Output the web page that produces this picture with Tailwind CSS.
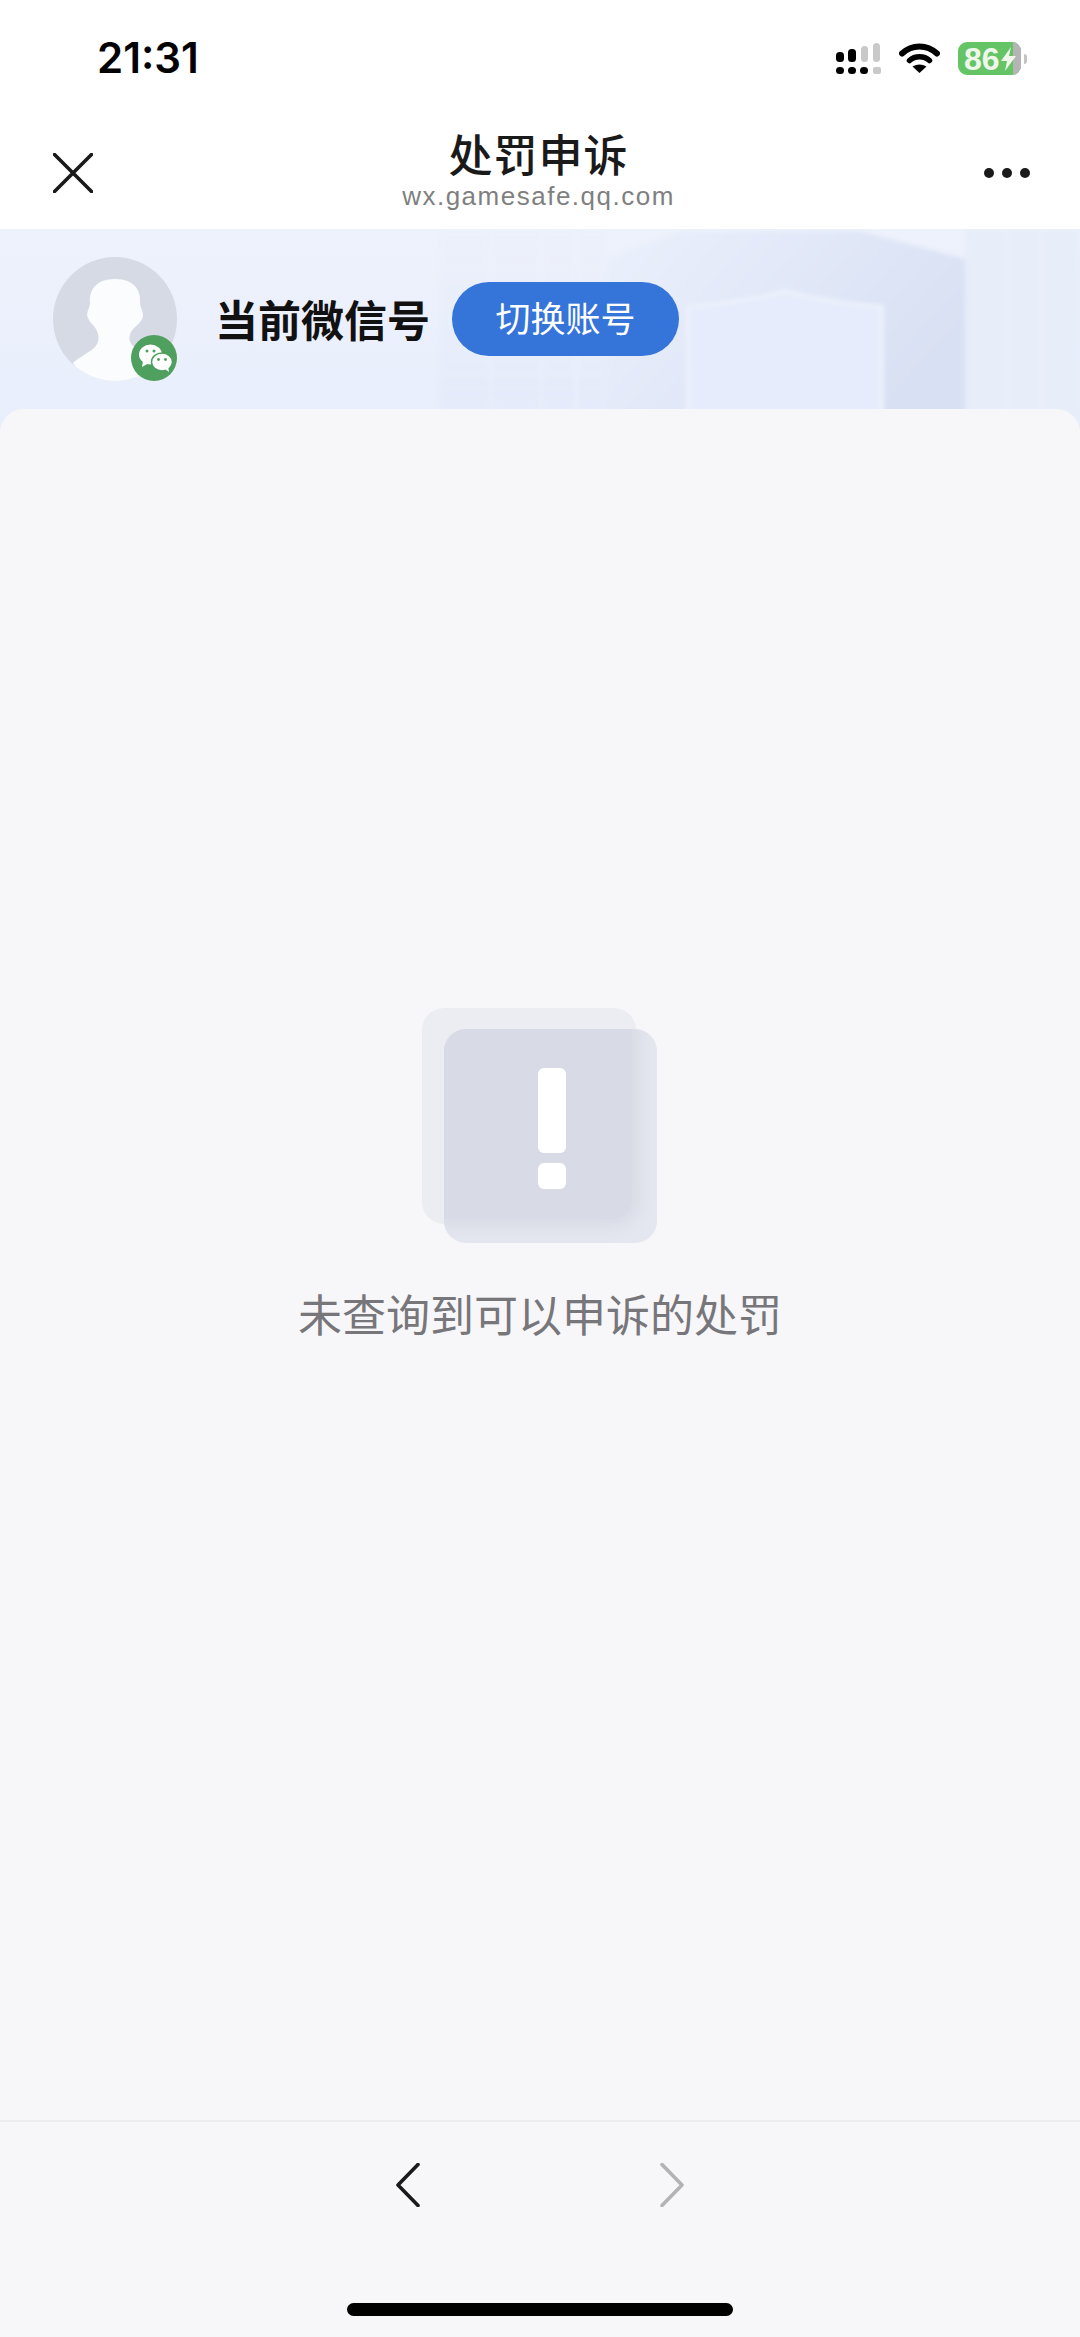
<!DOCTYPE html>
<html lang="zh-CN">
<head>
	<meta charset="UTF-8">
	<meta name="viewport" content="width=device-width, initial-scale=1.0">
	<title>处罚申诉</title>
	<script src="https://cdn.jsdelivr.net/npm/@tailwindcss/browser@4"></script>
</head>
<body class="bg-white font-['Inter','Noto_Sans_CJK_SC',sans-serif]">
<div class="w-[1080px] h-[2337px] flex flex-col overflow-hidden bg-[#f7f7f9]">

	<!-- status bar -->
	<div class="h-[120px] bg-white flex items-start justify-between pl-[97px] pr-[53px] pt-[33px] shrink-0">
		<div class="text-[42px] leading-[50px] font-semibold text-black">21:31</div>
		<div class="flex items-start gap-[18px] mt-[9px]">
			<svg class="mt-[1px]" width="45" height="31" viewBox="0 0 45 31">
				<g fill="#000">
					<rect x="0" y="9" width="8" height="10" rx="3.5"/><rect x="12" y="6" width="8" height="13" rx="3.5"/>
					<rect x="0" y="24" width="8" height="7" rx="3.5"/><rect x="12" y="24" width="8" height="7" rx="3.5"/><rect x="24" y="24" width="8" height="7" rx="3.5"/>
				</g>
				<g fill="#c9c9c9">
					<rect x="25" y="3" width="7" height="16" rx="3.5"/><rect x="37" y="0" width="7" height="19" rx="3.5"/><rect x="37" y="24" width="8" height="7" rx="2"/>
				</g>
			</svg>
			<svg class="mt-[1px]" width="41" height="30" viewBox="0 0 41 30">
				<path d="M3 10.5 C13 1 28 1 38 10.5" fill="none" stroke="#000" stroke-width="6" stroke-linecap="round"/>
				<path d="M10.5 17.5 C16 12.5 25 12.5 30.5 17.5" fill="none" stroke="#000" stroke-width="5.5" stroke-linecap="round"/>
				<path d="M13.5 23.5 Q20.5 19.5 27.5 23.5 L20.5 30 Z" fill="#000"/>
			</svg>
			<div class="flex items-center">
				<div class="relative w-[63px] h-[33px] rounded-[9px] bg-[#65c466] overflow-hidden flex items-center pl-[6px] text-[#eef7ea] text-[32px] leading-none font-bold font-['Liberation_Sans',sans-serif]">
					<div class="absolute right-0 top-0 bottom-0 w-[8px] bg-[#b5b5b5]"></div>
					<span class="relative">86</span>
					<svg class="relative" width="17" height="24" viewBox="0 0 17 24"><path d="M11 0 L1 14 H7 L5 24 L16 9 H9 Z" fill="#eef7ea"/></svg>
				</div>
				<div class="ml-[3px] w-[3px] h-[10px] rounded-r-[3px] bg-[#c4c4c4]"></div>
			</div>
		</div>
	</div>

	<!-- title bar -->
	<div class="h-[109px] bg-white flex items-start justify-between pl-[53px] pr-[50px] shrink-0">
		<svg class="mt-[33px]" width="40" height="40" viewBox="0 0 40 40"><path d="M1.5 1.5 L38.5 38.5 M38.5 1.5 L1.5 38.5" stroke="#1a1a1a" stroke-width="3.6" stroke-linecap="round"/></svg>
		<div class="flex flex-col items-center mt-[7px]">
			<div class="text-[44px] leading-[58px] font-medium text-[#1a1a1a] tracking-[1px]">处罚申诉</div>
			<div class="-mt-[4px] text-[26px] leading-[30px] text-[#7f7f7f] tracking-[1.5px] font-['Liberation_Sans',sans-serif]">wx.gamesafe.qq.com</div>
		</div>
		<div class="flex gap-[8px] mt-[48px]">
			<div class="w-[10px] h-[10px] rounded-full bg-[#1a1a1a]"></div>
			<div class="w-[10px] h-[10px] rounded-full bg-[#1a1a1a]"></div>
			<div class="w-[10px] h-[10px] rounded-full bg-[#1a1a1a]"></div>
		</div>
	</div>

	<!-- account banner -->
	<div class="relative h-[200px] shrink-0 overflow-hidden bg-gradient-to-b from-[#eef2fc] to-[#e8eefc] flex items-start pl-[53px] pt-[28px]">
		<!-- shield backdrop -->
		<svg class="absolute left-0 top-0 blur-[2px]" width="1080" height="200" viewBox="0 0 1080 200">
			<defs>
				<linearGradient id="big" x1="0" y1="0" x2="1" y2="0.5">
					<stop offset="0" stop-color="#ebf0fc"/>
					<stop offset="1" stop-color="#d8e0f3"/>
				</linearGradient>
				<linearGradient id="stripes" x1="0" y1="0" x2="0" y2="1">
					<stop offset="0" stop-color="#e9eefb" stop-opacity="0.2"/>
					<stop offset="1" stop-color="#e4eaf9"/>
				</linearGradient>
			</defs>
			<rect x="440" y="0" width="165" height="200" fill="url(#stripes)"/>
			<rect x="490" y="0" width="2" height="200" fill="#f0f4fd" opacity="0.4"/>
			<rect x="540" y="0" width="2" height="200" fill="#f0f4fd" opacity="0.4"/>
			<rect x="575" y="0" width="3" height="200" fill="#f0f4fd" opacity="0.4"/>
			<rect x="965" y="0" width="115" height="200" fill="#e8edfa"/>
			<rect x="1005" y="0" width="2" height="200" fill="#f0f4fd" opacity="0.6"/>
			<rect x="1040" y="0" width="2" height="200" fill="#f0f4fd" opacity="0.6"/>
			<path d="M605 30 L680 2 H860 L965 30 V200 H605 Z" fill="url(#big)"/>
			<path d="M688 78 L785 64 L882 78 V200 H688 Z" fill="#e6ecfb"/>
			<path d="M688 200 V78 Q750 72 785 62 Q820 72 882 78 V200" fill="none" stroke="#edf1fc" stroke-width="4"/>
		</svg>
		<div class="relative w-[124px] h-[124px] shrink-0">
			<div class="w-full h-full rounded-full overflow-hidden bg-[#d5dae4]">
				<svg width="124" height="124" viewBox="0 0 124 124">
					<path d="M62 22 C42 22 36 34 37 46 C37 50 34 54 34 58 C35 64 40 67 43 72 C46 78 47 84 42 90 C36 96 26 100 20 106 L30 124 H98 L108 100 C96 96 84 94 79 88 C75 83 76 77 80 72 C84 68 90 64 90 58 C90 54 87 50 87 46 C88 34 82 22 62 22 Z" fill="#fbfcfe"/>
				</svg>
			</div>
			<div class="absolute right-0 bottom-0 w-[46px] h-[46px] rounded-full bg-[#4f9f5f]">
				<svg width="46" height="46" viewBox="0 0 46 46">
					<ellipse cx="19.5" cy="19.5" rx="11.5" ry="10" fill="#fff"/>
					<path d="M12 26 L11 32 L18 28 Z" fill="#fff"/>
					<ellipse cx="31" cy="27" rx="10.5" ry="9" fill="#fff" stroke="#4f9f5f" stroke-width="1.5"/>
					<path d="M34 34 L38 37 L37 31 Z" fill="#fff"/>
					<circle cx="16" cy="16" r="1.5" fill="#4f9f5f"/><circle cx="23" cy="16" r="1.5" fill="#4f9f5f"/>
					<circle cx="27.5" cy="24.5" r="1.4" fill="#4f9f5f"/><circle cx="34.5" cy="24.5" r="1.4" fill="#4f9f5f"/>
				</svg>
			</div>
		</div>
		<div class="relative ml-[38px] mt-[34px] text-[43px] leading-[60px] font-bold text-[#111] whitespace-nowrap">当前微信号</div>
		<div class="relative ml-[22px] mt-[25px] w-[227px] h-[74px] rounded-full bg-[#3574d8] flex items-center justify-center text-[35px] text-white">切换账号</div>
	</div>

	<!-- main panel -->
	<div class="relative -mt-[20px] flex-1 rounded-t-[24px] bg-[#f7f7f9] flex flex-col items-center pt-[599px]">
		<div class="relative w-[235px] h-[235px] -ml-[2px]">
			<div class="absolute left-0 top-0 w-[214px] h-[216px] rounded-[22px] bg-[#ececf3]"></div>
			<div class="absolute left-[22px] top-[21px] w-[213px] h-[214px] rounded-[22px] bg-[#e4e7ef] overflow-hidden">
				<div class="w-[188px] h-[190px] rounded-br-[20px] bg-[#d8dbe5] shadow-[0_0_16px_8px_#d8dbe5]"></div>
			</div>
			<div class="absolute left-[116px] top-[60px] w-[28px] h-[85px] rounded-[6px] bg-white"></div>
			<div class="absolute left-[116px] top-[155px] w-[28px] h-[26px] rounded-[6px] bg-white"></div>
		</div>
		<div class="mt-[43px] text-[44px] leading-[60px] text-[#77767b]">未查询到可以申诉的处罚</div>
	</div>

	<!-- bottom toolbar -->
	<div class="h-[217px] shrink-0 border-t-2 border-[#ededf0] bg-[#f7f7f9] flex flex-col items-center">
		<div class="flex gap-[240px] mt-[41px]">
			<svg width="24" height="44" viewBox="0 0 24 44"><path d="M22 1.5 L2 22 L22 42.5" fill="none" stroke="#1a1a1a" stroke-width="3.6" stroke-linecap="round" stroke-linejoin="round"/></svg>
			<svg width="24" height="44" viewBox="0 0 24 44"><path d="M2 1.5 L22 22 L2 42.5" fill="none" stroke="#b3b3b3" stroke-width="3.6" stroke-linecap="round" stroke-linejoin="round"/></svg>
		</div>
		<div class="mt-[96px] w-[386px] h-[13px] rounded-full bg-black"></div>
	</div>
</div>
</body>
</html>
